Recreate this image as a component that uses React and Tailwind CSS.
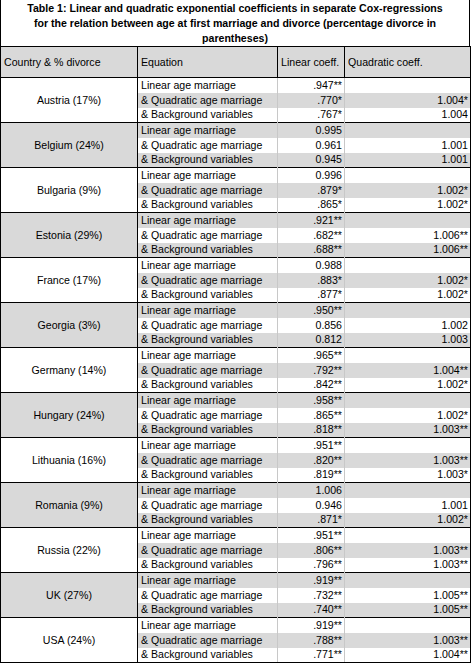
const groups = [
  { country: 'Austria (17%)', rows: [['.947**', ''], ['.770*', '1.004*'], ['.767*', '1.004']] },
  { country: 'Belgium (24%)', rows: [['0.995', ''], ['0.961', '1.001'], ['0.945', '1.001']] },
  { country: 'Bulgaria (9%)', rows: [['0.996', ''], ['.879*', '1.002*'], ['.865*', '1.002*']] },
  { country: 'Estonia (29%)', rows: [['.921**', ''], ['.682**', '1.006**'], ['.688**', '1.006**']] },
  { country: 'France (17%)', rows: [['0.988', ''], ['.883*', '1.002*'], ['.877*', '1.002*']] },
  { country: 'Georgia (3%)', rows: [['.950**', ''], ['0.856', '1.002'], ['0.812', '1.003']] },
  { country: 'Germany (14%)', rows: [['.965**', ''], ['.792**', '1.004**'], ['.842**', '1.002*']] },
  { country: 'Hungary (24%)', rows: [['.958**', ''], ['.865**', '1.002*'], ['.818**', '1.003**']] },
  { country: 'Lithuania (16%)', rows: [['.951**', ''], ['.820**', '1.003**'], ['.819**', '1.003*']] },
  { country: 'Romania (9%)', rows: [['1.006', ''], ['0.946', '1.001'], ['.871*', '1.002*']] },
  { country: 'Russia (22%)', rows: [['.951**', ''], ['.806**', '1.003**'], ['.796**', '1.003**']] },
  { country: 'UK (27%)', rows: [['.919**', ''], ['.732**', '1.005**'], ['.740**', '1.005**']] },
  { country: 'USA (24%)', rows: [['.919**', ''], ['.788**', '1.003**'], ['.771**', '1.004**']] },
]

const equations = ['Linear age marriage', '& Quadratic age marriage', '& Background variables']

export default function App() {
  return (
    <div className="w-[471px] h-[663px] overflow-hidden bg-white font-['Liberation_Sans',Arial,sans-serif] text-black">
      <div className="w-[470px] border-l border-r border-black pt-[1px] h-[46px] text-center text-[10.6px] font-bold leading-[15px] whitespace-nowrap">
        Table 1: Linear and quadratic exponential coefficients in separate Cox-regressions
        <br />
        for the relation between age at first marriage and divorce (percentage divorce in
        <br />
        parentheses)
      </div>
      <table className="w-[470px] table-fixed border-collapse text-[10.6px] leading-[13px]">
        <colgroup>
          <col className="w-[137px]" />
          <col className="w-[140px]" />
          <col className="w-[67px]" />
          <col className="w-[126px]" />
        </colgroup>
        <thead>
          <tr className="bg-[#d9d9d9] h-[31px]">
            <th className="border border-black px-[3px] py-0 text-left font-normal">Country &amp; % divorce</th>
            <th className="border border-black px-[3px] py-0 text-left font-normal">Equation</th>
            <th className="border border-black px-[3px] py-0 text-left font-normal">Linear coeff.</th>
            <th className="border border-black px-[3px] py-0 text-left font-normal">Quadratic coeff.</th>
          </tr>
        </thead>
        <tbody>
          {groups.map((g, gi) =>
            g.rows.map((r, ri) => {
              const gray = (gi * 3 + ri) % 2 === 1
              const bg = gray ? 'bg-[#d9d9d9]' : 'bg-white'
              const top = ri === 0 ? 'border-t border-t-black' : ''
              const bottom = gi === groups.length - 1 && ri === 2 ? 'border-b border-b-black' : ''
              return (
                <tr key={g.country + ri} className="h-[15px]">
                  {ri === 0 && (
                    <td
                      rowSpan={3}
                      className={`border border-black p-0 text-center align-middle ${gi % 2 === 1 ? 'bg-[#d9d9d9]' : 'bg-white'}`}
                    >
                      {g.country}
                    </td>
                  )}
                  <td className={`${bg} ${top} ${bottom} border-l border-l-black pl-[3px] pr-0 py-0 whitespace-nowrap overflow-hidden`}>
                    {equations[ri]}
                  </td>
                  <td className={`${bg} ${top} ${bottom} border-l border-l-[#c8c8c8] pl-0 pr-[2px] py-0 text-right`}>{r[0]}</td>
                  <td className={`${bg} ${top} ${bottom} border-l border-l-[#c8c8c8] border-r border-r-black pl-0 pr-[2px] py-0 text-right`}>
                    {r[1]}
                  </td>
                </tr>
              )
            })
          )}
        </tbody>
      </table>
    </div>
  )
}
